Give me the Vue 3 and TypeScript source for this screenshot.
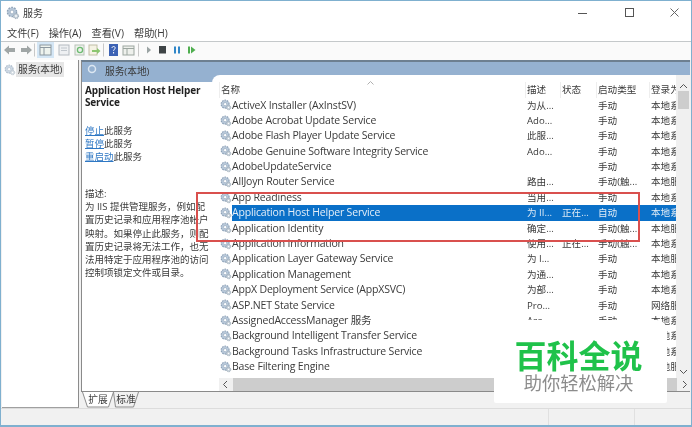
<script setup lang="ts">
interface Row { name: string; desc: string; status: string; start: string; logon: string; selected?: boolean }
const rows: Row[] = [
  { name: 'ActiveX Installer (AxInstSV)', desc: '为从...', status: '', start: '手动', logon: '本地系统' },
  { name: 'Adobe Acrobat Update Service', desc: 'Ado...', status: '', start: '手动', logon: '本地系统' },
  { name: 'Adobe Flash Player Update Service', desc: '此服...', status: '', start: '手动', logon: '本地系统' },
  { name: 'Adobe Genuine Software Integrity Service', desc: 'Ado...', status: '', start: '手动', logon: '本地系统' },
  { name: 'AdobeUpdateService', desc: '', status: '', start: '手动', logon: '本地系统' },
  { name: 'AllJoyn Router Service', desc: '路由...', status: '', start: '手动(触...', logon: '本地服务' },
  { name: 'App Readiness', desc: '当用...', status: '', start: '手动', logon: '本地系统' },
  { name: 'Application Host Helper Service', desc: '为 II...', status: '正在...', start: '自动', logon: '本地系统', selected: true },
  { name: 'Application Identity', desc: '确定...', status: '', start: '手动(触...', logon: '本地服务' },
  { name: 'Application Information', desc: '使用...', status: '正在...', start: '手动(触...', logon: '本地系统' },
  { name: 'Application Layer Gateway Service', desc: '为 I...', status: '', start: '手动', logon: '本地服务' },
  { name: 'Application Management', desc: '为通...', status: '', start: '手动', logon: '本地系统' },
  { name: 'AppX Deployment Service (AppXSVC)', desc: '为部...', status: '', start: '手动', logon: '本地系统' },
  { name: 'ASP.NET State Service', desc: 'Pro...', status: '', start: '手动', logon: '网络服务' },
  { name: 'AssignedAccessManager 服务', desc: 'Ass...', status: '', start: '手动', logon: '本地系统' },
  { name: 'Background Intelligent Transfer Service', desc: '使用...', status: '', start: '手动', logon: '本地系统' },
  { name: 'Background Tasks Infrastructure Service', desc: '控制...', status: '', start: '自动', logon: '本地系统' },
  { name: 'Base Filtering Engine', desc: '基本...', status: '', start: '自动', logon: '本地服务' },
]
const menus = ['文件(F)', '操作(A)', '查看(V)', '帮助(H)']
const columns = ['名称', '描述', '状态', '启动类型', '登录为']
const descLines = ['为 IIS 提供管理服务，例如配', '置历史记录和应用程序池帐户', '映射。如果停止此服务，则配', '置历史记录将无法工作，也无', '法用特定于应用程序池的访问', '控制项锁定文件或目录。']
</script>

<template>
  <div class="window">
    <svg width="0" height="0" class="defs">
      <symbol id="gear" viewBox="0 0 14 14">
        <circle cx="6" cy="6" r="4.600" fill="#b9c9da" stroke="#8fa3b8" stroke-width="1.400" stroke-dasharray="1.800 1.100" />
        <circle cx="6" cy="6" r="1.900" fill="#fff" stroke="#8fa3b8" stroke-width=".7" />
        <circle cx="10" cy="10" r="2.600" fill="#c3ced8" stroke="#98a6b2" stroke-width="1" stroke-dasharray="1.200 .7" />
        <circle cx="10" cy="10" r=".9" fill="#fff" />
      </symbol>
    </svg>

    <header class="titlebar">
      <svg class="title-icon"><use href="#gear" /></svg>
      <span class="title">服务</span>
      <div class="controls">
        <svg width="12" height="12" viewBox="0 0 12 12"><path d="M1 6.500h9" stroke="#555" fill="none" /></svg>
        <svg width="12" height="12" viewBox="0 0 12 12"><rect x="2.500" y="1.500" width="8" height="8" stroke="#555" fill="none" /></svg>
        <svg width="12" height="12" viewBox="0 0 12 12"><path d="M1.500 1.500l8 8M9.500 1.500l-8 8" stroke="#666" fill="none" /></svg>
      </div>
    </header>

    <nav class="menubar">
      <span v-for="m in menus" :key="m">{{ m }}</span>
    </nav>

    <div class="toolbar">
      <svg width="196" height="16" viewBox="0 0 196 16">
        <path d="M3 8l5-4.500v2.500h6v4H8v2.500z" fill="#a0a6a6" />
        <path d="M31 8l-5-4.500v2.500h-6v4h6v2.500z" fill="#a0a6a6" />
        <path d="M33.500 1.500v13" stroke="#c8c8c8" />
        <rect x="36" y="0" width="17" height="16" fill="#d4e6f5" />
        <rect x="39" y="3" width="11" height="10" fill="#eef3ee" stroke="#8c98a0" />
        <path d="M39 5.500h11M43 5.500V13" stroke="#8c98a0" />
        <rect x="58" y="3" width="10" height="10" fill="#eef0f2" stroke="#b4bac0" />
        <path d="M60 6h6M60 8.500h6" stroke="#c0c6cc" />
        <rect x="74" y="3" width="9" height="10" fill="#eef2ec" stroke="#b8c2b8" />
        <circle cx="79" cy="8" r="2.600" fill="none" stroke="#6dbb72" stroke-width="1.300" />
        <rect x="88" y="3" width="8" height="10" fill="#f5f3e4" stroke="#c0bea6" />
        <path d="M91 8h5V6l3.500 3-3.500 3v-2h-5z" fill="#8cc670" />
        <path d="M102.500 1.500v13" stroke="#c8c8c8" />
        <rect x="108" y="2" width="9" height="12" fill="#3c62b4" />
        <path d="M111 6c0-2 3.200-2 3.200 0 0 1.400-1.600 1.200-1.600 2.800M112.600 10v1.500" stroke="#fff" fill="none" />
        <rect x="122" y="4" width="11" height="9" fill="#eef0ec" stroke="#9ca6a0" />
        <path d="M122 6.500h11M126 6.500V13" stroke="#9ca6a0" />
        <path d="M137.500 1.500v13" stroke="#c8c8c8" />
        <path d="M146 4.500l4 3.500-4 3.500z" fill="#9aa3a3" />
        <rect x="158" y="4" width="7" height="7.500" fill="#3e4446" />
        <path d="M173 4.500h2v7h-2zM177 4.500h2v7h-2z" fill="#2f86c8" />
        <path d="M187 4.500h2v7h-2z" fill="#4fae4f" /><path d="M190 4.500l4.500 3.500-4.500 3.500z" fill="#4fae4f" />
      </svg>
    </div>

    <main class="workspace">
      <aside class="tree">
        <div class="tree-item">
          <svg class="gear"><use href="#gear" /></svg>
          <span class="tree-label">服务(本地)</span>
        </div>
      </aside>

      <section class="content">
        <div class="band">
          <svg class="band-icon" viewBox="0 0 14 14"><circle cx="6" cy="6" r="3.500" fill="none" stroke="#dce7f2" stroke-width="1.500" /></svg>
          <span>服务(本地)</span>
        </div>

        <div class="split">
          <div class="details">
            <h2>Application Host Helper Service</h2>
            <p class="actions">
              <span><a>停止</a>此服务</span>
              <span><a>暂停</a>此服务</span>
              <span><a>重启动</a>此服务</span>
            </p>
            <p class="description">
              <span>描述:</span>
              <span v-for="l in descLines" :key="l">{{ l }}</span>
            </p>
          </div>

          <div class="list">
            <div class="table-area">
              <div class="table">
                <svg class="sort" width="7" height="4" viewBox="0 0 7 4"><path d="M.5 3.500l3-3 3 3" fill="none" stroke="#b0b0b0" /></svg>
                <div class="row head">
                  <span v-for="c in columns" :key="c" class="cell">{{ c }}</span>
                </div>
                <div v-for="r in rows" :key="r.name" class="row">
                  <span class="cell name">
                    <svg class="gear"><use href="#gear" /></svg>
                    <span class="name-text" :class="{ sel: r.selected }">{{ r.name }}</span>
                  </span>
                  <span class="cell" :class="{ sel: r.selected }">{{ r.desc }}</span>
                  <span class="cell" :class="{ sel: r.selected }">{{ r.status }}</span>
                  <span class="cell" :class="{ sel: r.selected }">{{ r.start }}</span>
                  <span class="cell" :class="{ sel: r.selected }">{{ r.logon }}</span>
                </div>
              </div>
              <div class="vscroll">
                <svg width="9" height="6" viewBox="0 0 9 6"><path d="M1 5l3.500-3.500L8 5" fill="none" stroke="#555" /></svg>
                <div class="thumb-v"></div>
                <svg class="down" width="9" height="6" viewBox="0 0 9 6"><path d="M1 1l3.500 3.500L8 1" fill="none" stroke="#555" /></svg>
              </div>
            </div>
            <div class="hscroll">
              <svg width="6" height="9" viewBox="0 0 6 9"><path d="M5 1L1.500 4.500 5 8" fill="none" stroke="#555" /></svg>
              <div class="thumb-h"></div>
              <svg width="6" height="9" viewBox="0 0 6 9"><path d="M1 1l3.500 3.500L1 8" fill="none" stroke="#555" /></svg>
            </div>
          </div>
        </div>

        <div class="tabs">
          <span class="tab first">
            <svg class="tab-shape" width="32" height="16" viewBox="0 0 32 16"><path d="M.5 0l5 15h21l5-15" fill="#fff" stroke="#8d8d8d" /></svg>
            <span class="tab-label">扩展</span>
          </span>
          <span class="tab second">
            <svg class="tab-shape" width="26" height="16" viewBox="0 0 26 16"><path d="M.5 0l2 15h18l5-15" fill="none" stroke="#8d8d8d" /></svg>
            <span class="tab-label">标准</span>
          </span>
        </div>
      </section>
    </main>

    <footer class="statusbar">
      <i class="s1"></i><i class="s2"></i>
    </footer>

    <div class="redbox"></div>
    <div class="watermark">
      <strong>百科全说</strong>
      <span>助你轻松解决</span>
    </div>
  </div>
</template>

<style>
html, body { margin: 0; background: #fff; overflow: hidden; }
</style>

<style scoped>
.window {
  position: relative;
  width: 692px;
  height: 427px;
  box-sizing: border-box;
  border: 1px solid #7fb0cf;
  border-bottom-width: 2px;
  background: #fff;
  display: flex;
  flex-direction: column;
  overflow: hidden;
  font: 10.5px/15px "Open Sans", "Noto Sans CJK SC", sans-serif;
  color: #3a3a3a;
  filter: blur(.45px);
}
.defs { position: absolute; }
.titlebar { height: 24px; display: flex; align-items: center; padding-left: 5px; flex: none; }
.title-icon { width: 14px; height: 14px; }
.title { margin-left: 3px; font-size: 10px; }
.controls { margin-left: auto; display: flex; gap: 34px; padding-right: 10px; }
.menubar { height: 16px; display: flex; gap: 10px; padding-left: 6px; border-bottom: 1px solid #c4c8ca; flex: none; line-height: 16px; font-size: 10.200px; }
.toolbar { height: 18px; background: #fafafa; box-sizing: border-box; flex: none; }
.toolbar svg { display: block; }
.workspace { flex: 1; display: flex; min-height: 0; background: #f1f1f1; }
.tree { width: 76px; margin-left: 1px; background: #fff; border-right: 1px solid #8c8c8c; border-bottom: 1px solid #a0a0a0; flex: none; }
.tree-item { display: flex; align-items: center; margin: 2px 0 0 2px; }
.tree-item .gear { opacity: .7; }
.tree-label { background: #e6e6e6; padding: 0 2px; margin-left: 0; font-size: 9.700px; }
.content { flex: 1; margin-left: 2px; display: flex; flex-direction: column; min-width: 0; }
.band { height: 20px; background: #95b1d0; border-top: 2px solid #6d7f90; border-left: 1px solid #8a8a8a; display: flex; align-items: flex-start; padding-left: 4px; flex: none; margin-right: 1px; }
.band span { margin-left: 5px; line-height: 20px; font-size: 9.700px; }
.band-icon { width: 14px; height: 14px; margin-top: 1px; }
.split { flex: 1; display: flex; min-height: 0; background: #fff; border-left: 1px solid #8a8a8a; border-bottom: 1px solid #8a8a8a; margin-right: 1px; }
.details { width: 130px; flex: none; padding: 2px 0 0 3px; box-sizing: border-box; }
.details h2 { margin: 0; font-size: 10px; line-height: 12px; font-weight: 700; letter-spacing: -.15px; color: #222; }
.actions, .description { margin: 0; display: flex; flex-direction: column; font-size: 9.500px; white-space: nowrap; }
.actions { margin-top: 16px; line-height: 13px; }
.actions a { color: #2f78c4; text-decoration: underline; }
.description { margin-top: 24px; line-height: 13.200px; }
.list { flex: 1; min-width: 0; display: flex; flex-direction: column; margin-top: -7px; background: #fff; border-top-left-radius: 8px; position: relative; }
.table-area { flex: 1; display: flex; min-height: 0; }
.table { flex: 1; min-width: 0; overflow: hidden; position: relative; padding: 7px 0 0 8px; }
.sort { position: absolute; left: 155px; top: 6px; }
.row { display: grid; grid-template-columns: 306px 35px 36px 53px 1fr; height: 15.400px; line-height: 15.400px; white-space: nowrap; }
.head { height: 15.500px; }
.head .cell { padding-left: 1px; box-shadow: -1px 0 0 #eee; font-size: 9.700px; }
.cell { overflow: hidden; }
.name { display: flex; align-items: center; }
.gear { width: 12px; height: 12px; flex: none; }
.name-text { font-size: 10.500px; letter-spacing: -.17px; }
.name-text.sel { flex: 1; background: #0a70c8; color: #e4eef8; align-self: stretch; }
.cell.sel { background: #0a70c8; color: #dfeaf5; }
.row .cell:not(.name) { font-size: 9.600px; padding-left: 1px; }
.vscroll { width: 14px; flex: none; background: #f0f0f0; display: flex; flex-direction: column; align-items: center; padding-top: 8px; position: relative; }
.thumb-v { width: 11px; height: 18px; background: #cdcdcd; margin-top: 2px; }
.down { position: absolute; bottom: 3px; left: 3px; }
.hscroll { height: 13px; margin-left: 7px; background: #f0f0f0; display: flex; align-items: center; padding: 0 2px 0 3px; flex: none; gap: 5px; }
.thumb-h { flex: 1; height: 13px; background: #cdcdcd; }
.tabs { height: 16px; display: flex; flex: none; padding-left: 1px; background: #f1f1f1; }
.tab { position: relative; display: block; height: 16px; text-align: center; }
.tab.first { width: 32px; }
.tab.second { width: 26px; margin-left: -1px; }
.tab-shape { position: absolute; left: 0; top: 0; }
.tab-label { position: relative; font-size: 9.700px; line-height: 15px; }
.statusbar { height: 17px; box-sizing: border-box; flex: none; background: #f1f1f1; border-top: 1px solid #dcdcdc; display: flex; justify-content: flex-end; }
.statusbar .s1 { width: 85px; border-left: 1px solid #e0e0e0; }
.statusbar .s2 { width: 56px; border-left: 1px solid #e0e0e0; }
.redbox { position: absolute; left: 195px; top: 191px; width: 440px; height: 46px; border: 2px solid #d9504e; }
.watermark { position: absolute; left: 493px; top: 319px; width: 173px; height: 83px; background: #fff; border-radius: 12px 10px 2px 2px; display: flex; flex-direction: column; align-items: center; }
.watermark strong { font: 700 32px/36px "Noto Sans CJK SC", sans-serif; color: #1fc24a; margin-top: 16px; margin-right: 4px; }
.watermark span { font: 400 18.300px/24px "Noto Sans CJK SC", sans-serif; color: #8c8c8c; margin-top: -2px; margin-right: 4px; }
</style>
